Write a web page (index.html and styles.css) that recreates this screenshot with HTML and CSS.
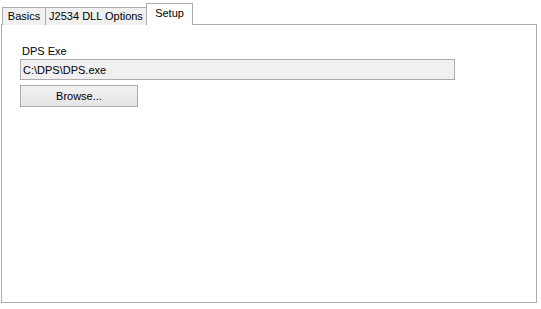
FILE: index.html
```html
<!DOCTYPE html>
<html lang="en">
<head>
    <meta charset="UTF-8">
    <title>Setup</title>
    <link rel="stylesheet" href="styles.css">
</head>
<body>
    <div class="tabs">
        <div class="tab tab-basics">Basics</div>
        <div class="tab tab-j2534">J2534 DLL Options</div>
        <div class="tab tab-setup active">Setup</div>
    </div>
    <div class="panel">
        <label class="field-label" for="dps-exe">DPS Exe</label>
        <input id="dps-exe" class="path-box" type="text" value="C:\DPS\DPS.exe" readonly>
        <button class="browse" type="button">Browse...</button>
    </div>
</body>
</html>
```

FILE: styles.css
```css
body {
    margin: 0;
    background: #ffffff;
    font-family: "Liberation Sans", Arial, sans-serif;
    font-size: 11px;
    color: #000;
}

.tabs {
    display: flex;
    align-items: flex-end;
    height: 24px;
    padding-left: 2px;
}

.tab {
    box-sizing: border-box;
    height: 18px;
    margin-bottom: -1px;
    border: 1px solid #acacac;
    border-bottom: none;
    background: #f0f0f0;
    text-align: center;
    line-height: 17px;
}

.tab + .tab {
    margin-left: -1px;
}

.tab-basics {
    width: 44px;
}

.tab-j2534 {
    width: 102px;
}

.tab-setup {
    width: 47px;
}

.tab.active {
    position: relative;
    z-index: 1;
    height: 22px;
    background: #ffffff;
    line-height: 19px;
}

.panel {
    box-sizing: border-box;
    width: 536px;
    height: 279px;
    margin-left: 1px;
    border: 1px solid #acacac;
    padding: 19px 0 0 18px;
    display: flex;
    flex-direction: column;
    align-items: flex-start;
}

.field-label {
    padding-left: 2px;
    line-height: 14px;
    margin-bottom: 1px;
}

.path-box {
    box-sizing: border-box;
    width: 435px;
    height: 21px;
    margin: 0;
    padding: 0 2px;
    border: 1px solid #acacac;
    background: #f0f0f0;
    font: inherit;
    color: #000;
    outline: none;
}

.browse {
    box-sizing: border-box;
    width: 118px;
    height: 22px;
    margin: 5px 0 0;
    border: 1px solid #acacac;
    border-radius: 0;
    background: linear-gradient(#f2f2f2, #e5e5e5);
    font: inherit;
    color: #000;
    padding: 0;
}
```
